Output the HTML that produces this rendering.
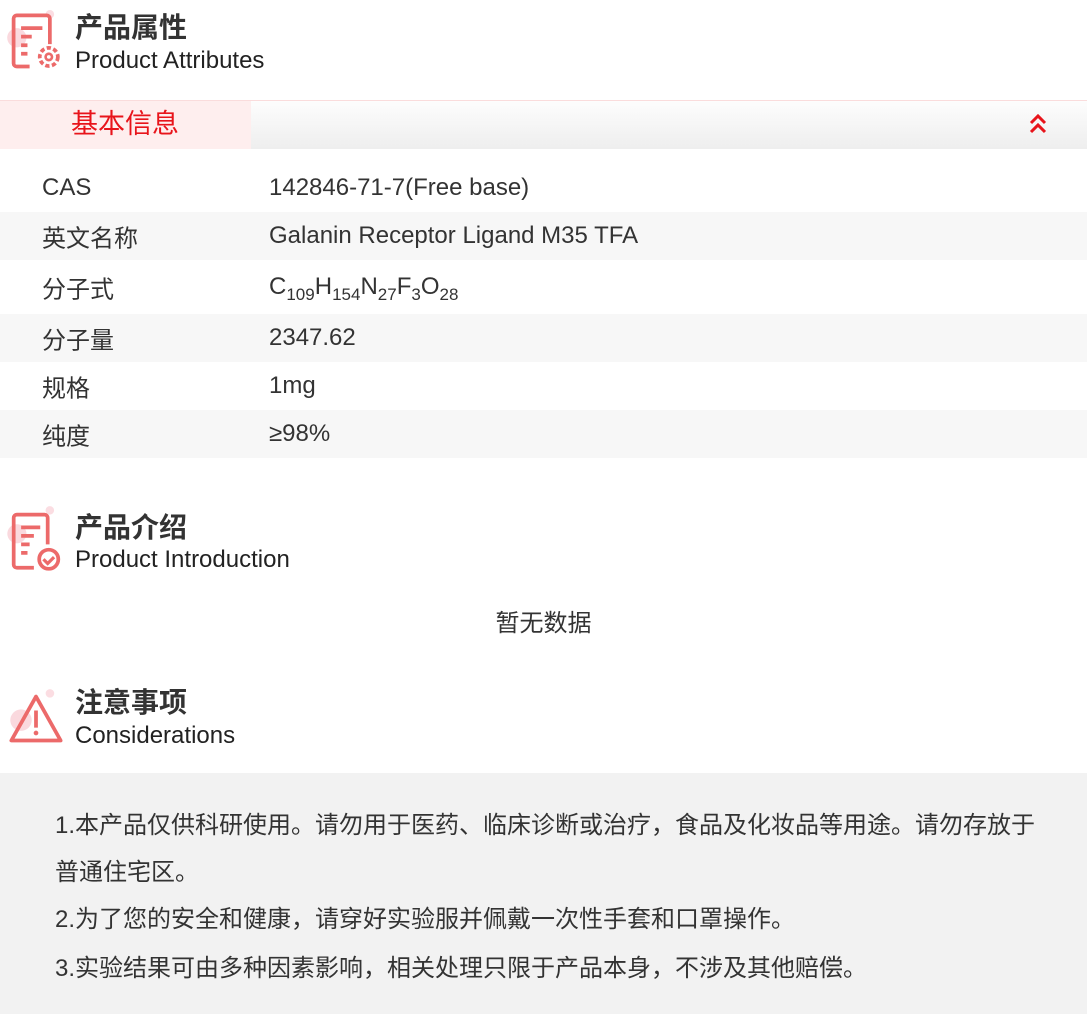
<!DOCTYPE html>
<html><head><meta charset="utf-8"><style>
*{margin:0;padding:0;box-sizing:border-box}
body{width:1087px;height:1014px;background:#fff;font-family:"Liberation Sans","Noto Sans CJK SC",sans-serif;color:#333;position:relative;overflow:hidden}
.abs{position:absolute}
.t1{font-size:28px;font-weight:bold;color:#333;line-height:32px}
.t2{font-size:24px;color:#222;line-height:28px;white-space:nowrap}
.row{position:absolute;left:0;width:1087px;font-size:24px;color:#333}
.row span{position:absolute;top:50%;transform:translateY(-50%);white-space:nowrap}
.g{background:#f7f7f7}
sub{font-size:17px;vertical-align:-6px;line-height:0}
.note{position:absolute;left:55px;font-size:24px;color:#333;white-space:nowrap}
</style></head><body>

<svg class="abs" style="left:6px;top:10px" width="60" height="64" viewBox="0 0 56 60">
<circle cx="10" cy="26" r="9" fill="#f9d0d6" opacity=".8"/><circle cx="41" cy="4" r="4" fill="#fbdde2"/>
<path d="M22 53H10a3 3 0 0 1-3-3V8a3 3 0 0 1 3-3h28a3 3 0 0 1 3 3v24" fill="none" stroke="#ec6a6a" stroke-width="3.5"/>
<path d="M14 17h20M14 25h10M14 33h6M14 41h6" stroke="#ec6a6a" stroke-width="3.5"/>
<circle cx="40" cy="44" r="8.5" fill="none" stroke="#ec6a6a" stroke-width="3.5" stroke-dasharray="4 2.3"/>
<circle cx="40" cy="44" r="3" fill="none" stroke="#ec6a6a" stroke-width="2.5"/>
</svg>
<div class="abs t1" style="left:75px;top:12px">产品属性</div>
<div class="abs t2" style="left:75px;top:47px">Product Attributes</div>

<div class="abs" style="left:0;top:100px;width:1087px;height:49px;background:linear-gradient(#fdfdfd,#eeeeee);border-top:1px solid #fadcdc"></div>
<div class="abs" style="left:0;top:100px;width:251px;height:49px;background:#feeeee;border-top:1px solid #fadcdc;color:#e8141b;font-size:27px;line-height:47px;padding-left:71px">基本信息</div>
<svg class="abs" style="left:1028px;top:113px" width="20" height="22" viewBox="0 0 20 22"><path d="M3 10l7-7 7 7M3 19l7-7 7 7" fill="none" stroke="#e8141b" stroke-width="3"/></svg>

<div class="row" style="top:164px;height:48px"><span style="left:42px">CAS</span><span style="left:269px">142846-71-7(Free base)</span></div>
<div class="row g" style="top:212px;height:48px"><span style="left:42px">英文名称</span><span style="left:269px">Galanin Receptor Ligand M35 TFA</span></div>
<div class="row" style="top:260px;height:54px"><span style="left:42px">分子式</span><span style="left:269px">C<sub>109</sub>H<sub>154</sub>N<sub>27</sub>F<sub>3</sub>O<sub>28</sub></span></div>
<div class="row g" style="top:314px;height:48px"><span style="left:42px">分子量</span><span style="left:269px">2347.62</span></div>
<div class="row" style="top:362px;height:48px"><span style="left:42px">规格</span><span style="left:269px">1mg</span></div>
<div class="row g" style="top:410px;height:48px"><span style="left:42px">纯度</span><span style="left:269px">≥98%</span></div>

<svg class="abs" style="left:6px;top:504px" width="60" height="68" viewBox="0 0 56 64">
<circle cx="10" cy="28" r="9" fill="#f9d0d6" opacity=".8"/><circle cx="41" cy="6" r="4" fill="#fbdde2"/>
<path d="M26 60H10a3 3 0 0 1-3-3V13a3 3 0 0 1 3-3h26a3 3 0 0 1 3 3v25" fill="none" stroke="#ec6a6a" stroke-width="3.5"/>
<path d="M14 22h18M14 30h12M14 38h8M14 46h6" stroke="#ec6a6a" stroke-width="3.5"/>
<circle cx="40" cy="52" r="9" fill="none" stroke="#ec6a6a" stroke-width="3.5"/>
<path d="M35 52l4 4 6-6" fill="none" stroke="#ec6a6a" stroke-width="3"/>
</svg>
<div class="abs t1" style="left:75px;top:512px">产品介绍</div>
<div class="abs t2" style="left:75px;top:546px">Product Introduction</div>

<div class="abs" style="left:0;width:1087px;top:603px;text-align:center;font-size:24px;color:#333">暂无数据</div>

<svg class="abs" style="left:6px;top:688px" width="60" height="60" viewBox="0 0 56 56">
<circle cx="14" cy="30" r="10" fill="#f9d0d6" opacity=".8"/><circle cx="41" cy="5" r="4" fill="#fbdde2"/>
<path d="M28 8L5 49h46z" fill="none" stroke="#ec6a6a" stroke-width="3.5" stroke-linejoin="round"/>
<path d="M28 21v16" stroke="#ec6a6a" stroke-width="3.5"/><circle cx="28" cy="42" r="2.2" fill="#ec6a6a"/>
</svg>
<div class="abs t1" style="left:75px;top:687px">注意事项</div>
<div class="abs t2" style="left:75px;top:722px">Considerations</div>

<div class="abs" style="left:0;top:773px;width:1087px;height:241px;background:#f2f2f2"></div>
<div class="note" style="top:805px">1.本产品仅供科研使用。请勿用于医药、临床诊断或治疗，食品及化妆品等用途。请勿存放于</div>
<div class="note" style="top:852px">普通住宅区。</div>
<div class="note" style="top:899px">2.为了您的安全和健康，请穿好实验服并佩戴一次性手套和口罩操作。</div>
<div class="note" style="top:948px">3.实验结果可由多种因素影响，相关处理只限于产品本身，不涉及其他赔偿。</div>
</body></html>
